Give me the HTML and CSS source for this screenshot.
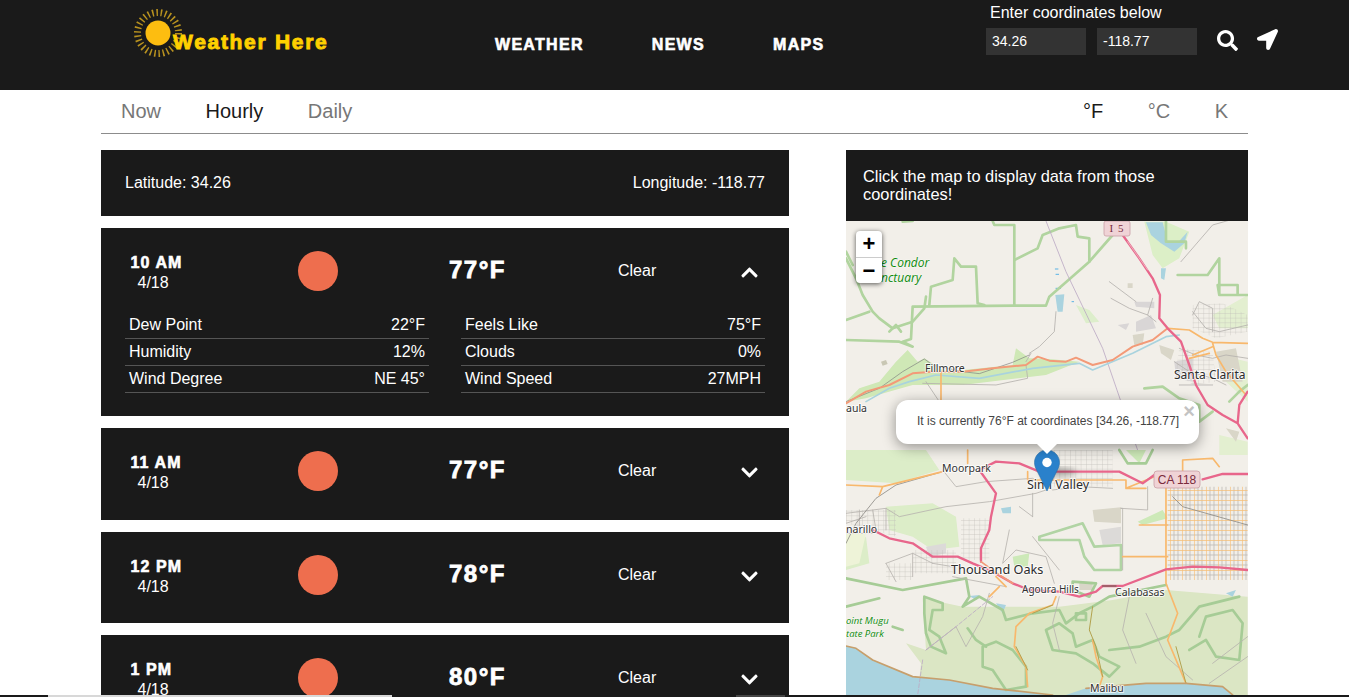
FILE: index.html
```html
<!DOCTYPE html>
<html lang="en">
<head>
<meta charset="utf-8">
<title>Weather Here</title>
<link rel="stylesheet" href="styles.css">
</head>
<body>
<header class="topbar">
  <div class="brand">
    <svg class="sun" viewBox="0 0 50 50" aria-hidden="true">
      <circle class="sun-rays" cx="25" cy="25" r="20.5"/>
      <circle class="sun-core" cx="25" cy="25" r="12.5"/>
    </svg>
    <span class="brand-name">Weather Here</span>
  </div>
  <nav class="mainnav">
    <a>WEATHER</a><a>NEWS</a><a>MAPS</a>
  </nav>
  <div class="coords">
    <div class="coords-label">Enter coordinates below</div>
    <div class="coords-row">
      <div class="coord-input">34.26</div>
      <div class="coord-input">-118.77</div>
      <svg class="tool-icon search-icon" viewBox="0 0 512 512"><path d="M505 442.7L405.3 343c-4.5-4.5-10.6-7-17-7H372c27.6-35.3 44-79.7 44-128C416 93.1 322.9 0 208 0S0 93.1 0 208s93.1 208 208 208c48.3 0 92.7-16.4 128-44v16.3c0 6.4 2.5 12.5 7 17l99.7 99.7c9.4 9.4 24.6 9.4 33.9 0l28.3-28.3c9.4-9.4 9.4-24.6.1-34zM208 336c-70.7 0-128-57.2-128-128 0-70.7 57.2-128 128-128 70.7 0 128 57.2 128 128 0 70.7-57.2 128-128 128z"/></svg>
      <svg class="tool-icon arrow-icon" viewBox="0 0 512 512"><path d="M444.52 3.52L28.74 195.42c-47.97 22.39-31.98 92.75 19.19 92.75h175.91v175.91c0 51.17 70.36 67.17 92.75 19.19l191.9-415.78c15.99-38.39-25.59-79.97-63.97-63.97z"/></svg>
    </div>
  </div>
</header>

<main class="page">
  <div class="tabs">
    <div class="tab-group">
      <a class="tab">Now</a><a class="tab active">Hourly</a><a class="tab">Daily</a>
    </div>
    <div class="tab-group">
      <a class="tab active">°F</a><a class="tab">°C</a><a class="tab">K</a>
    </div>
  </div>

  <div class="columns">
    <section class="left">
      <div class="latlon"><span>Latitude: 34.26</span><span>Longitude: -118.77</span></div>

      <article class="card card-open">
        <div class="card-row">
          <div class="time"><div class="hour">10 AM</div><div class="date">4/18</div></div>
          <div class="ball"></div>
          <div class="temp">77°F</div>
          <div class="cond">Clear</div>
          <svg class="chev" viewBox="0 0 448 512"><path d="M240.971 130.524l194.343 194.343c9.373 9.373 9.373 24.569 0 33.941l-22.667 22.667c-9.357 9.357-24.522 9.375-33.901.04L224 227.495 69.255 381.516c-9.379 9.335-24.544 9.317-33.901-.04l-22.667-22.667c-9.373-9.373-9.373-24.569 0-33.941L207.03 130.525c9.372-9.373 24.568-9.373 33.941-.001z"/></svg>
        </div>
        <div class="details">
          <div class="detail-col">
            <div class="detail"><span>Dew Point</span><span>22°F</span></div>
            <div class="detail"><span>Humidity</span><span>12%</span></div>
            <div class="detail"><span>Wind Degree</span><span>NE 45°</span></div>
          </div>
          <div class="detail-col">
            <div class="detail"><span>Feels Like</span><span>75°F</span></div>
            <div class="detail"><span>Clouds</span><span>0%</span></div>
            <div class="detail"><span>Wind Speed</span><span>27MPH</span></div>
          </div>
        </div>
      </article>

      <article class="card">
        <div class="card-row">
          <div class="time"><div class="hour">11 AM</div><div class="date">4/18</div></div>
          <div class="ball"></div>
          <div class="temp">77°F</div>
          <div class="cond">Clear</div>
          <svg class="chev" viewBox="0 0 448 512"><path d="M207.029 381.476L12.686 187.132c-9.373-9.373-9.373-24.569 0-33.941l22.667-22.667c9.357-9.357 24.522-9.375 33.901-.04L224 284.505l154.745-154.021c9.379-9.335 24.544-9.317 33.901.04l22.667 22.667c9.373 9.373 9.373 24.569 0 33.941L240.971 381.476c-9.373 9.372-24.569 9.372-33.942 0z"/></svg>
        </div>
      </article>

      <article class="card">
        <div class="card-row">
          <div class="time"><div class="hour">12 PM</div><div class="date">4/18</div></div>
          <div class="ball"></div>
          <div class="temp">78°F</div>
          <div class="cond">Clear</div>
          <svg class="chev" viewBox="0 0 448 512"><path d="M207.029 381.476L12.686 187.132c-9.373-9.373-9.373-24.569 0-33.941l22.667-22.667c9.357-9.357 24.522-9.375 33.901-.04L224 284.505l154.745-154.021c9.379-9.335 24.544-9.317 33.901.04l22.667 22.667c9.373 9.373 9.373 24.569 0 33.941L240.971 381.476c-9.373 9.372-24.569 9.372-33.942 0z"/></svg>
        </div>
      </article>

      <article class="card">
        <div class="card-row">
          <div class="time"><div class="hour">1 PM</div><div class="date">4/18</div></div>
          <div class="ball"></div>
          <div class="temp">80°F</div>
          <div class="cond">Clear</div>
          <svg class="chev" viewBox="0 0 448 512"><path d="M207.029 381.476L12.686 187.132c-9.373-9.373-9.373-24.569 0-33.941l22.667-22.667c9.357-9.357 24.522-9.375 33.901-.04L224 284.505l154.745-154.021c9.379-9.335 24.544-9.317 33.901.04l22.667 22.667c9.373 9.373 9.373 24.569 0 33.941L240.971 381.476c-9.373 9.372-24.569 9.372-33.942 0z"/></svg>
        </div>
      </article>
    </section>

    <aside class="right">
      <div class="map-title">Click the map to display data from those coordinates!</div>
      <div class="map">
        <svg class="map-art" viewBox="0 0 402 474" aria-label="Map of Simi Valley">
          <defs>
            <filter id="soft" x="-2%" y="-2%" width="104%" height="104%"><feGaussianBlur stdDeviation="1.1"/></filter>
            <filter id="shade"><feGaussianBlur stdDeviation="3"/></filter>
            <pattern id="grid" width="36" height="30" patternUnits="userSpaceOnUse">
              <path d="M12 0V30M24 0V30M0 15H36" stroke="#bdb9b5" stroke-width="2.5" fill="none"/>
              <path d="M0 0V30M0 0H36" stroke="#f6bf78" stroke-width="4" fill="none"/>
            </pattern>
            <pattern id="mesh" width="16" height="14" patternUnits="userSpaceOnUse">
              <path d="M0 0V14M0 0H16" stroke="#c0bcb8" stroke-width="2" fill="none"/>
            </pattern>
          </defs>
          <rect width="402" height="474" fill="#f2efe9"/>

          <!-- northern half, drawn in 3x units -->
          <g transform="translate(0,-6) scale(.3333)" filter="url(#soft)" fill="none" stroke-linejoin="round" stroke-linecap="round">
            <path fill="#cfe8b6" d="M0 560L40 520 100 500 150 440 185 405 215 440 235 430 300 470 500 450 510 400 550 430 610 432 700 440 600 480 350 510 200 510 60 550z"/>
            <path fill="#ddeecb" d="M690 270L730 285 760 320 720 325z"/>
            <path fill="#e3efd0" d="M1100 300L1205 240V340L1120 340zM1120 420L1205 440V560L1140 500zM1120 660L1205 680V720H1120z"/>
            <path fill="#dcefc7" d="M895 20L960 20 1030 50 1000 130 950 160 920 120z"/>
            <path fill="#aad3df" d="M900 22L915 60 945 85 985 110 1015 85 1025 50 1000 78 965 80 950 22zM945 160L960 160 955 195 945 190zM628 240L655 238 650 290 635 290z"/>
            <path stroke="#5ab3e5" stroke-width="3" d="M628 162h8M630 178h8M630 220h14M678 260h5"/>
            <path fill="#d9d6c8" d="M860 360L895 355 890 390 865 390zM940 390L985 405 975 435 945 415zM1110 410L1170 400 1190 500 1130 500zM1140 640L1180 650 1170 680zM845 205l15 0 0 14-15 0z"/>
            <path fill="#d9d6d6" d="M870 320L915 300 930 340 870 350zM865 260L925 260 925 280 870 275zM815 330L850 325 840 345zM985 440L1040 430 1040 500 990 490z"/>
            <path fill="url(#mesh)" d="M1040 270L1130 265 1205 300V350L1110 370 1040 340zM1000 400L1100 410 1110 500 1040 510 990 470z"/>
            <path fill="#c9c7b4" d="M105 440l15 -5 5 12 -15 5z"/>
            <g stroke="#b1d49f" stroke-width="8">
              <path d="M0 130L30 190 50 240 80 290 100 310 140 340 200 320 235 280 240 245"/>
              <path d="M0 315L70 290M130 350L150 330 165 350"/>
              <path d="M0 375L160 380 200 395 170 380 195 372 200 275 505 272 600 272 610 245 730 140 800 60 830 20"/>
              <path d="M505 272V30H445L440 18"/>
              <path d="M505 135L575 100 590 60 640 40 690 30 695 65 730 70V140"/>
              <path d="M250 270L255 215 320 195 325 130 345 155 390 155 395 265 415 270"/>
              <path d="M0 110L20 150M200 18L170 20M960 18V80H1020V100"/>
              <path d="M995 180H1085L1120 130V240H1205M1120 240L1115 210 1175 210 1175 240"/>
              <path d="M895 520L950 515 1000 550 1060 570V620L1100 590"/>
              <path d="M1205 510L1180 530 1150 560"/>
            </g>
            <g stroke="#b5b1ad" stroke-width="2.5">
              <path d="M795 250L850 280 905 300 930 320M905 300L920 250M1005 140L1100 30 1205 0"/>
              <path d="M1000 400L1050 420 1100 430 1140 420 1205 430M1040 290L1080 340 1120 350 1205 330M1040 300L1060 260 1100 280 1100 350M985 440L1030 470 1100 490 1140 510M1000 510H1100"/>
              <path d="M630 290L625 350 580 395 550 415M555 415L540 440M540 450L545 490 450 510 230 505M240 500L280 560M790 200L870 260"/>
            </g>
            <path stroke="#7e7e7e" stroke-width="2" d="M0 560L100 520 170 470 235 432 260 450 350 470 400 476 500 442 550 420"/>
            <path stroke="#bca9c4" stroke-width="2.5" d="M600 18L660 170 770 400 880 720"/>
            <path stroke="#a9d3de" stroke-width="5" d="M60 560L130 520 190 500 270 480 400 490 560 460 700 445 740 465 860 415 960 365 1000 360"/>
            <path stroke="#f8b86c" stroke-width="5" d="M965 340L1030 345 1070 370 1100 382 1205 385M1100 385L1110 420 1140 470 1200 540M1040 420L1100 395M285 470V560M1030 430L1090 415"/>
            <path stroke="#f39a78" stroke-width="6" d="M0 565L60 530 130 510 200 475 260 470 350 470 440 460 540 450 575 425 610 437 660 440 690 428 740 450 800 435 860 395 920 375 965 340"/>
            <path stroke="#e8668b" stroke-width="7" d="M830 60L880 130 920 190 942 240 940 310 965 340 1005 380 1030 450 1050 510 1085 570 1130 600 1175 625 1205 670M1175 625L1180 570 1205 530"/>
            <path stroke="#f2efe9" stroke-width="1.6" d="M845 80L905 165"/>
          </g>

          <!-- southern half -->
          <g transform="translate(0,229) scale(.3333)" filter="url(#soft)" fill="none" stroke-linejoin="round" stroke-linecap="round">
            <path fill="#dbe6c4" d="M230 445L350 470 450 470 640 470 800 450 960 420 1205 440V735H215L225 640 180 580 240 600z"/>
            <path fill="#aad3df" d="M0 588L30 595 80 630 200 680 310 690 440 715 620 735H660L720 715 900 700 1020 700 1130 710 1160 735H0z"/>
            <path fill="#dcedc8" d="M0 0H240L280 60 150 100 0 90zM120 170L260 160 330 200 340 290 260 300 200 260 130 240zM0 300L60 260 70 340 0 360z"/>
            <path fill="#eef3d8" d="M0 250H60L40 340 0 350z"/>
            <path fill="#d9d6c8" d="M740 180L825 172 825 220 745 215zM700 395H740V420H700z"/>
            <path fill="#dcdad8" d="M760 240L825 230 825 280 770 285zM240 290L300 280 300 310 250 320z"/>
            <path fill="#cde9b8" d="M875 215L950 180 965 205 890 225zM500 320L550 310 545 350 505 350zM840 0L900 0 880 40z"/>
            <path fill="#aad3df" d="M465 175L495 170 495 190 470 190zM370 438L400 435 390 450zM450 460L480 465 470 490zM1140 430L1170 420 1160 440z"/>
            <path fill="url(#mesh)" d="M345 205H430V330H345zM580 0H800V110H580zM0 180H150V260L80 240 0 220zM200 300H330V370H200zM120 340H200V390H120z"/>
            <path fill="url(#grid)" d="M965 110H1205V390H965z"/>
            <g stroke="#a6cc96" stroke-width="8">
              <path d="M580 260L710 220 745 290 825 285V360H745L715 320 700 270H580z" stroke="#b1d4a4"/>
              <path d="M235 440L290 460V480H260L250 540 280 560 300 610 255 590 240 550 235 490z"/>
              <path d="M0 385L170 420 360 385 370 440 350 470 400 440 470 480 480 510 560 490 640 480 660 520 700 490 740 470 790 440 960 405"/>
              <path d="M410 590L450 575 500 600 540 650V710L480 720 440 660 410 650z"/>
              <path d="M600 540L640 520 680 550 690 590 740 570 760 620 820 650 790 680 740 640 690 610 620 600z"/>
              <path d="M790 600L880 590 960 560 1000 540 1060 470 1180 440"/>
              <path d="M1030 600L1080 570 1110 620 1180 630 1190 520 1160 480 1080 500 1060 560"/>
              <path d="M365 535L390 570 420 590M690 490L720 490 720 510 690 510zM680 395L750 400 730 440 680 420zM820 0L845 40 900 40 920 0"/>
              <path d="M140 530L170 540M0 470L100 445"/>
            </g>
            <g stroke="#b7b3ae" stroke-width="2.5">
              <path d="M0 190L80 180 120 175 160 200 300 170 430 155 570 130 600 120M0 220L60 200M80 180L90 240M120 175V240M40 180V230M0 250H80"/>
              <path d="M290 60L330 110 420 95 560 85 620 120 700 110 800 115M560 130V200M520 170L560 200"/>
              <path d="M490 240L470 340 510 300 600 320 625 400M560 260L640 360"/>
              <path d="M120 340L200 310 260 340M120 340L150 395M200 310V380M260 340L320 350M320 380L480 410M430 430L410 500 360 590 330 530 240 600M640 440L620 520 640 600M850 440L830 540 870 640M900 490L960 620 1040 690M1100 640L1205 560M1090 700L1205 620"/>
              <path d="M825 175H830V360M825 175L905 180V110"/>
            </g>
            <path stroke="#8d8a86" stroke-width="2.5" d="M0 280L30 220 90 145 150 105 290 65M980 140L1010 170 1205 225"/>
            <path stroke="#bca9c4" stroke-width="2.5" stroke-dasharray="12 6" d="M240 600L330 530 440 440M230 630L215 735"/>
            <path stroke="#f8b86c" stroke-width="5" d="M0 105L110 110 290 65M110 110L100 135M365 0V40M545 90V65M545 90H840V115H900M840 115L925 80M830 320H965M960 110V400L995 490 965 570 1020 700M1010 30L1100 25 1120 50M1010 30V110M880 225H965M430 440L460 410M450 380L480 410M510 530L550 490 620 465 630 440M510 530L505 590 540 650 545 710M740 570L750 620 770 680 760 710"/>
            <path stroke="#b2a24f" stroke-width="3" d="M510 590L545 660M740 470L730 540 750 590 770 680M990 590L1020 700M560 490L620 465"/>
            <path stroke="#c79f6c" stroke-width="5" d="M0 588L30 595 80 630 200 680 310 690 440 715 620 735M720 715L900 700 1020 700 1130 710 1160 735"/>
            <path stroke="#e8668b" stroke-width="7" d="M80 240L130 265 200 280 260 320H335L380 340 440 365 500 400 550 420 640 425 700 440 750 425 770 408H830L960 358 1040 350 1120 352 1205 360M405 335V295L430 240 435 200 450 130 400 60 450 35 520 40 580 65H820L890 100 925 75M1070 88L1130 72H1205"/>
            <path stroke="#f39a78" stroke-width="5" d="M405 335L460 375 500 400"/>
            <path stroke="#8a5f60" stroke-width="4" d="M770 408H810"/>
          </g>

          <!-- road shields -->
          <rect class="shield" x="258" y="0" width="26" height="15" rx="2"/>
          <text class="shield-text shield-i5" x="271" y="11">I 5</text>
          <rect class="shield" x="308" y="250" width="46" height="17" rx="3"/>
          <text class="shield-text" x="331" y="263">CA 118</text>

          <!-- place labels -->
          <g class="places">
            <text class="place-green" x="35" y="46">e Condor</text>
            <text class="place-green" x="35" y="61">nctuary</text>
            <text class="place-green small" x="0" y="403">oint Mugu</text>
            <text class="place-green small" x="0" y="416">tate Park</text>
            <text class="place" x="79" y="151">Fillmore</text>
            <text class="place" x="0" y="191">aula</text>
            <text class="town clarita" x="328" y="158">Santa Clarita</text>
            <text class="place" x="96" y="251">Moorpark</text>
            <text class="town-sm" x="181" y="268">Simi Valley</text>
            <text class="place" x="0" y="312">narillo</text>
            <text class="town" x="105" y="353">Thousand Oaks</text>
            <text class="place agoura" x="176" y="372">Agoura Hills</text>
            <text class="place" x="269" y="375">Calabasas</text>
            <text class="place" x="244" y="471">Malibu</text>
          </g>

          <!-- marker -->
          <ellipse class="marker-shadow" cx="212" cy="251" rx="18" ry="5"/>
          <path class="marker" d="M201 229c-6.900 0-12.500 5.600-12.500 12.500 0 3 1 5.600 2.600 8.500L201 270l9.900-20c1.600-2.900 2.600-5.500 2.600-8.500 0-6.900-5.600-12.500-12.500-12.500z"/>
          <circle cx="201" cy="241.500" r="4.700" fill="#fff"/>
        </svg>

        <div class="zoom">
          <div class="zoom-btn">+</div>
          <div class="zoom-btn">−</div>
        </div>

        <div class="popup">
          <span class="popup-close">×</span>
          It is currently 76°F at coordinates [34.26, -118.77]
          <span class="popup-tip"></span>
        </div>
      </div>
    </aside>
  </div>
</main>

<div class="scrollbar"><span class="thumb"></span><span class="thumb-dark"></span></div>
</body>
</html>
```
FILE: styles.css
```css
* { box-sizing: border-box; }
html, body { height: 100%; }
body {
  margin: 0;
  overflow: hidden;
  background: #fff;
  color: #fff;
  font-family: "Liberation Sans", Arial, sans-serif;
  font-size: 16px;
}

/* header */
.topbar {
  height: 90px;
  background: #1a1a1a;
  display: flex;
  align-items: flex-start;
}
.brand {
  width: 360px;
  margin-left: 133px;
  padding-top: 8px;
  display: flex;
}
.sun { width: 50px; height: 50px; flex: none; }
.sun-rays {
  fill: none;
  stroke: #b8921f;
  stroke-width: 7;
  stroke-dasharray: 1.5 2.79;
}
.sun-core { fill: #fdbd10; }
.brand-name {
  margin: 22px 0 0 -10px;
  color: #ffd000;
  font-weight: 700;
  font-size: 21px;
  line-height: 24px;
  letter-spacing: 1.7px;
  white-space: nowrap;
  -webkit-text-stroke: .9px #ffd000;
}
.mainnav {
  width: 493px;
  padding: 35px 0 0 2px;
  display: flex;
  gap: 68px;
}
.mainnav a {
  color: #fff;
  font-weight: 700;
  font-size: 16px;
  line-height: 20px;
  letter-spacing: 1.300px;
  -webkit-text-stroke: .6px #fff;
}
.coords { width: 300px; }
.coords-label {
  margin: 3px 0 0 4px;
  line-height: 19px;
}
.coords-row {
  margin-top: 6px;
  display: flex;
  align-items: flex-start;
}
.coord-input {
  width: 100px;
  height: 27px;
  margin-right: 11px;
  padding-left: 6px;
  background: #333;
  font-size: 14px;
  line-height: 27px;
}
.tool-icon { width: 21px; height: 21px; fill: #fff; flex: none; }
.search-icon { margin: 2px 0 0 9px; }
.arrow-icon { margin: 1px 0 0 19px; }

/* page */
.page { width: 1147px; margin-left: 101px; }
.tabs {
  height: 44px;
  border-bottom: 1px solid #8c8c8c;
  display: flex;
  justify-content: space-between;
  padding: 0 20px 0 20px;
}
.tab-group { display: flex; gap: 44.500px; }
.tab {
  color: #777;
  font-size: 20px;
  line-height: 43px;
}
.tab.active { color: #1a1a1a; }

.columns {
  margin-top: 16px;
  display: flex;
  justify-content: space-between;
  align-items: flex-start;
}
.left {
  width: 688px;
  display: flex;
  flex-direction: column;
  gap: 12px;
}
.latlon {
  height: 66px;
  padding: 0 24px;
  background: #1a1a1a;
  display: flex;
  justify-content: space-between;
  align-items: center;
}
.card {
  height: 91.500px;
  background: #1a1a1a;
}
.card-open { height: 188px; }
.card-row {
  height: 84px;
  padding-left: 29px;
  display: grid;
  grid-template-columns: 168px 151px 169px 120px 16px;
  align-items: center;
}
.time { margin-top: 6px; padding-left: .5px; }
.hour {
  font-weight: 700;
  font-size: 16px;
  line-height: 20px;
  letter-spacing: 1.100px;
  -webkit-text-stroke: .6px #fff;
}
.date {
  margin-left: 7px;
  line-height: 20px;
}
.ball {
  width: 40px;
  height: 40px;
  margin-top: 2px;
  border-radius: 50%;
  background: #ee6e4e;
}
.temp {
  font-weight: 700;
  font-size: 24px;
  line-height: 28px;
  letter-spacing: 1.500px;
  -webkit-text-stroke: .8px #fff;
}
.cond { margin-top: 2px; line-height: 20px; }
.chev { width: 17px; height: 19px; margin-left: 3px; margin-top: 5px; fill: #fff; }

.details {
  padding: 0 24px;
  display: flex;
  justify-content: space-between;
}
.detail-col { width: 304px; }
.detail {
  height: 27px;
  padding: 4px 4px 0;
  border-bottom: 1px solid #555;
  display: flex;
  justify-content: space-between;
  line-height: 18px;
}

/* map column */
.right { width: 402px; }
.map-title {
  height: 71px;
  padding: 17px 17px 0;
  background: #1a1a1a;
  font-size: 16.400px;
  line-height: 18px;
}
.map {
  position: relative;
  height: 480px;
  overflow: hidden;
  background: #f2efe9;
}
.map-art { display: block; width: 402px; height: 474px; }

.shield { fill: #f0d3d6; stroke: #c9a0a6; stroke-width: .8; }
.shield-text {
  font-family: "Liberation Sans", sans-serif;
  font-size: 12px;
  fill: #7a2a3c;
  text-anchor: middle;
}
.shield-i5 { font-family: "Liberation Serif", serif; font-size: 11px; letter-spacing: 1px; }
.places text {
  font-family: "Noto Sans", "Open Sans", sans-serif;
  paint-order: stroke;
  stroke: rgba(255,255,255,.75);
  stroke-width: 2px;
  stroke-linejoin: round;
}
.place { font-size: 10.500px; fill: #333; }
.places .agoura { font-size: 10px; }
.town { font-size: 12.700px; fill: #2d2d2d; }
.places .clarita { font-size: 12px; }
.town-sm { font-size: 12.500px; fill: #2d2d2d; }
.places .place-green {
  font-family: "Open Sans", "Noto Sans", sans-serif;
  font-style: italic;
  font-size: 12px;
  fill: #0c8a0c;
  stroke: rgba(255,255,255,.5);
  stroke-width: 1px;
}
.places .place-green.small { font-size: 9.500px; }
.marker { fill: #2a81cb; stroke: #2a6fa8; stroke-width: .6; }
.marker-shadow { fill: rgba(0,0,0,.25); filter: url(#shade); }

.zoom {
  position: absolute;
  left: 10px;
  top: 10px;
  width: 26px;
  border-radius: 4px;
  background: #fff;
  box-shadow: 0 1px 5px rgba(0,0,0,.65);
  overflow: hidden;
}
.zoom-btn {
  height: 26px;
  color: #000;
  font-weight: 700;
  font-size: 22px;
  line-height: 26px;
  text-align: center;
}
.zoom-btn + .zoom-btn { border-top: 1px solid #ccc; }

.popup {
  position: absolute;
  left: 50px;
  top: 179px;
  width: 303px;
  height: 44px;
  padding: 14px 0 0 21px;
  border-radius: 12px;
  background: #fff;
  color: #444;
  font-size: 12px;
  line-height: 14px;
  white-space: nowrap;
  box-shadow: 0 3px 14px rgba(0,0,0,.4);
}
.popup-close {
  position: absolute;
  top: 3px;
  right: 4px;
  color: #c3c3c3;
  font-weight: 700;
  font-size: 20px;
  line-height: 16px;
}
.popup-tip {
  position: absolute;
  left: 141px;
  top: 44px;
  width: 0;
  height: 0;
  border-left: 10px solid transparent;
  border-right: 10px solid transparent;
  border-top: 10px solid #fff;
}

/* bottom strip */
.scrollbar {
  position: fixed;
  left: 0;
  right: 0;
  bottom: 0;
  height: 2px;
  background: #1a1a1a;
}
.thumb {
  position: absolute;
  left: 48px;
  width: 344px;
  height: 2px;
  background: #d8d8d8;
}
.thumb-dark {
  position: absolute;
  left: 736px;
  width: 49px;
  height: 2px;
  background: #444;
}
```
